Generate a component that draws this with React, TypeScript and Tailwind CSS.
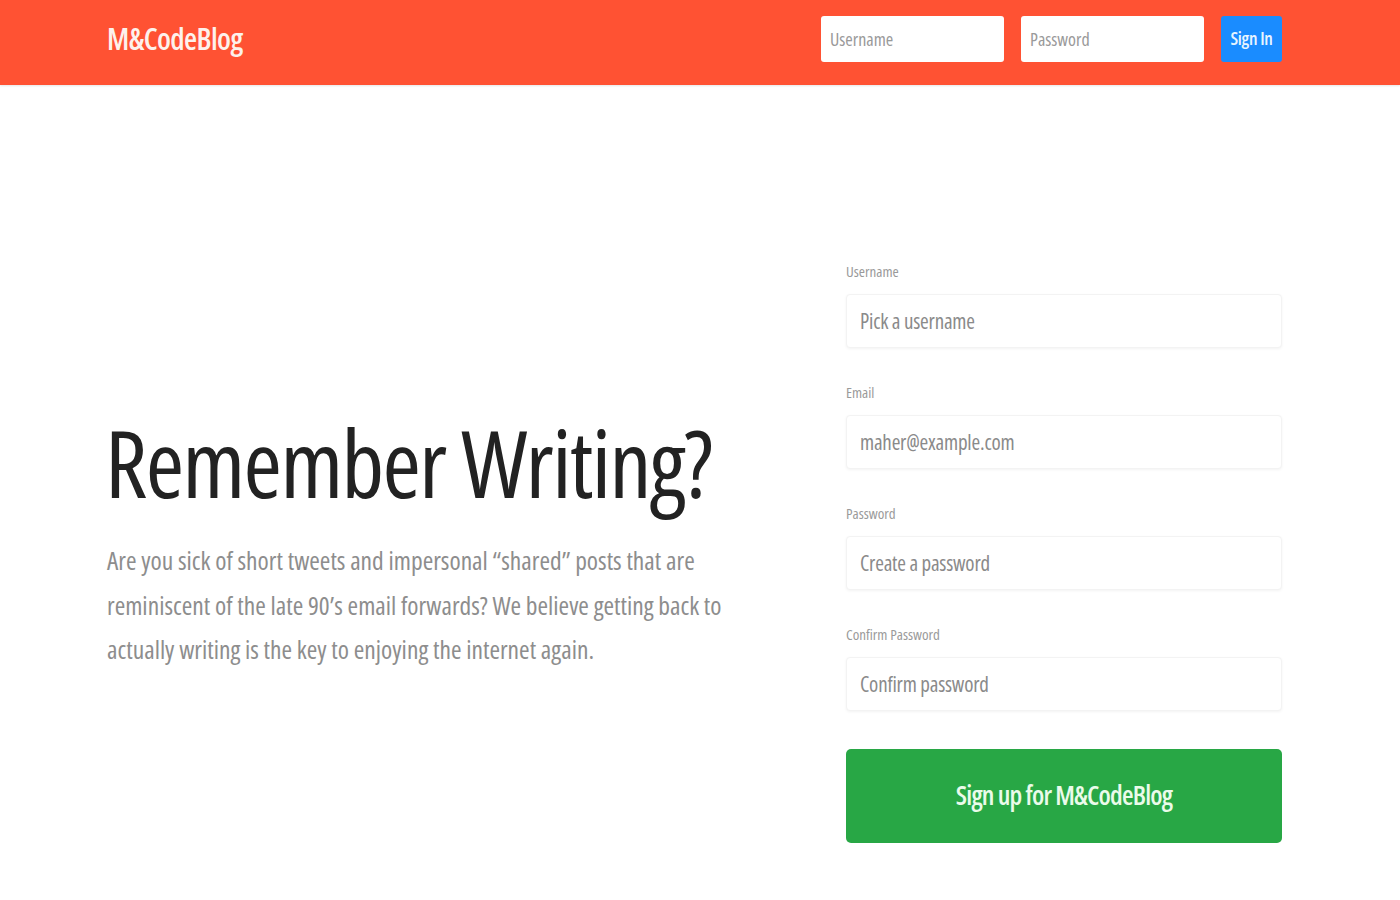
import React from "react";

const font = { fontFamily: '"Open Sans", "Liberation Sans", sans-serif' };

function Field({ label, placeholder, type = "text" }: { label: string; placeholder: string; type?: string }) {
  return (
    <div className="flex flex-col">
      <label className="text-[15px] leading-[18px] text-[#9a9a9a] [font-stretch:80%] mb-[14px]">{label}</label>
      <input
        type={type}
        placeholder={placeholder}
        className="h-[54px] w-full rounded-[4px] border border-[#f3f3f3] bg-white px-[13px] text-[21px] [font-stretch:75%] tracking-[-0.2px] text-[#555] placeholder:text-[#8a8a8a] shadow-[0_1px_3px_rgba(0,0,0,0.05)] outline-none"
      />
    </div>
  );
}

export default function App() {
  return (
    <div className="min-h-[900px] bg-white" style={font}>
      <header className="h-[85px] bg-[#ff5233] shadow-[0_1px_2px_rgba(0,0,0,0.1)]">
        <div className="ml-[107px] flex h-full w-[1175px] items-center justify-between">
          <div className="text-[30px] font-semibold text-[#fdf1ec] [font-stretch:75%] tracking-[-0.6px] -mt-[8px]">M&amp;CodeBlog</div>
          <div className="flex items-center gap-[17px] -mt-[8px]">
            <input
              placeholder="Username"
              className="h-[46px] w-[183px] rounded-[3px] bg-white px-[9px] text-[18px] [font-stretch:75%] placeholder:text-[#999] outline-none"
            />
            <input
              type="password"
              placeholder="Password"
              className="h-[46px] w-[183px] rounded-[3px] bg-white px-[9px] text-[18px] [font-stretch:75%] placeholder:text-[#999] outline-none"
            />
            <button className="h-[46px] w-[61px] rounded-[3px] bg-[#1a8cff] text-[18px] font-semibold text-[#e8f4ff] [font-stretch:75%] tracking-[-0.3px]">
              Sign In
            </button>
          </div>
        </div>
      </header>
      <main className="ml-[107px] flex w-[1175px] items-start justify-between pt-[180px]">
        <div className="w-[640px] pt-[147px]">
          <h1 className="text-[93px] leading-[100px] text-[#222] [font-stretch:75%] tracking-[-1.6px] -ml-[2px]">Remember Writing?</h1>
          <p className="mt-[26px] text-[25.5px] leading-[44.5px] text-[#8d8d8d] [font-stretch:75%]">
            Are you sick of short tweets and impersonal “shared” posts that are reminiscent of the late 90’s email forwards? We believe getting back to actually writing is the key to enjoying the internet again.
          </p>
        </div>
        <form className="-mt-[3px] flex w-[436px] flex-col gap-[35px]" onSubmit={(e) => e.preventDefault()}>
          <Field label="Username" placeholder="Pick a username" />
          <Field label="Email" placeholder="maher@example.com" />
          <Field label="Password" placeholder="Create a password" type="password" />
          <Field label="Confirm Password" placeholder="Confirm password" type="password" />
          <button className="mt-[3px] h-[94px] w-full rounded-[5px] bg-[#28a745] text-[26.5px] font-semibold text-[#eafbea] [font-stretch:75%] tracking-[-0.8px]">
            Sign up for M&amp;CodeBlog
          </button>
        </form>
      </main>
    </div>
  );
}
